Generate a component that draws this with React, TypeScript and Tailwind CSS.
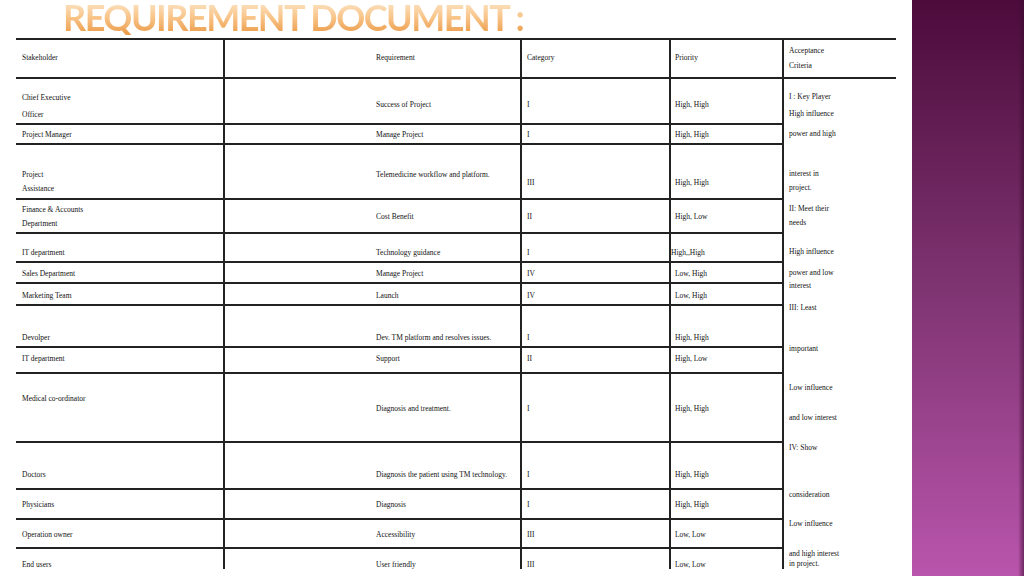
import React from 'react'

type Row = {
  s: string[]
  r: string
  c: string
  p: string
  sPad: string // stakeholder padding-top
  pad: string // padding-top for the other cells
  rPad?: string
  sGap?: string
  pPl?: string
}

const rows: Row[] = [
  { s: ['Chief Executive', 'Officer'], r: 'Success of Project', c: 'I', p: 'High, High', sPad: 'pt-[15px]', pad: 'pt-[22px]', sGap: 'gap-[9px]' },
  { s: ['Project Manager'], r: 'Manage Project', c: 'I', p: 'High, High', sPad: 'pt-[6px]', pad: 'pt-[6px]' },
  { s: ['Project', 'Assistance'], r: 'Telemedicine workflow and platform.', c: 'III', p: 'High, High', sPad: 'pt-[26px]', pad: 'pt-[34px]', rPad: 'pt-[26px]', sGap: 'gap-[6px]' },
  { s: ['Finance & Accounts', 'Department'], r: 'Cost Benefit', c: 'II', p: 'High, Low', sPad: 'pt-[6px]', pad: 'pt-[13px]', sGap: 'gap-[6px]' },
  { s: ['IT department'], r: 'Technology guidance', c: 'I', p: 'High,,High', sPad: 'pt-[15px]', pad: 'pt-[15px]', pPl: 'pl-0' },
  { s: ['Sales Department'], r: 'Manage Project', c: 'IV', p: 'Low, High', sPad: 'pt-[7px]', pad: 'pt-[7px]' },
  { s: ['Marketing Team'], r: 'Launch', c: 'IV', p: 'Low, High', sPad: 'pt-[8px]', pad: 'pt-[8px]' },
  { s: ['Devolper'], r: 'Dev. TM platform and resolves issues.', c: 'I', p: 'High, High', sPad: 'pt-[28px]', pad: 'pt-[28px]' },
  { s: ['IT department'], r: 'Support', c: 'II', p: 'High, Low', sPad: 'pt-[7px]', pad: 'pt-[7px]' },
  { s: ['Medical co-ordinator'], r: 'Diagnosis and treatment.', c: 'I', p: 'High, High', sPad: 'pt-[21px]', pad: 'pt-[31px]' },
  { s: ['Doctors'], r: 'Diagnosis the patient using TM technology.', c: 'I', p: 'High, High', sPad: 'pt-[28px]', pad: 'pt-[28px]' },
  { s: ['Physicians'], r: 'Diagnosis', c: 'I', p: 'High, High', sPad: 'pt-[11px]', pad: 'pt-[11px]' },
  { s: ['Operation owner'], r: 'Accessibility', c: 'III', p: 'Low, Low', sPad: 'pt-[11px]', pad: 'pt-[11px]' },
  { s: ['End users'], r: 'User friendly', c: 'III', p: 'Low, Low', sPad: 'pt-[12px]', pad: 'pt-[12px]' },
]

// acceptance criteria lines, each with its top margin
const criteria: [string, string][] = [
  ['I : Key Player', 'mt-[14px]'],
  ['High influence', 'mt-[9px]'],
  ['power and high', 'mt-[12px]'],
  ['interest in', 'mt-[32px]'],
  ['project.', 'mt-[6px]'],
  ['II: Meet their', 'mt-[13px]'],
  ['needs', 'mt-[6px]'],
  ['High influence', 'mt-[21px]'],
  ['power and low', 'mt-[13px]'],
  ['interest', 'mt-[5px]'],
  ['III: Least', 'mt-[14px]'],
  ['important', 'mt-[33px]'],
  ['Low influence', 'mt-[31px]'],
  ['and low interest', 'mt-[22px]'],
  ['IV: Show', 'mt-[22px]'],
  ['consideration', 'mt-[39px]'],
  ['Low influence', 'mt-[21px]'],
  ['and high interest', 'mt-[22px]'],
  ['in project.', 'mt-[2px]'],
]

export default function App() {
  return (
    <div className="flex h-[576px] w-[1024px] overflow-hidden bg-white">
      <div className="flex w-[912px] flex-col">
        {/* Title */}
        <div className="h-[38px] pl-[63px]">
          <h1 className="bg-gradient-to-b from-[#fde6c8] via-[#f8c488] to-[#eb9a45] bg-clip-text font-['Lato',sans-serif] text-[36px] font-bold leading-[35px] tracking-[-1.5px] text-transparent">
            REQUIREMENT DOCUMENT :
          </h1>
        </div>

        {/* Table */}
        <div className="ml-4 grid w-[880px] grid-cols-[209px_297px_149px_113px_112px] grid-rows-[39px_46px_20px_55px_34px_29px_21px_22px_42px_26px_69px_47px_30px_29px_20px] border-t-2 border-[#222] font-['Liberation_Serif',serif] text-[7.5px] leading-[8px] text-[#111]">
          <div className="border-b-2 border-r-2 border-[#222] pl-[6px] pt-[14px]">Stakeholder</div>
          <div className="border-b-2 border-r-2 border-[#222] pl-[151px] pt-[14px]">Requirement</div>
          <div className="border-b-2 border-r-2 border-[#222] pl-[5px] pt-[14px]">Category</div>
          <div className="border-b-2 border-r-2 border-[#222] pl-[4px] pt-[14px]">Priority</div>
          <div className="flex flex-col gap-[7px] border-b-2 border-[#222] pl-[5px] pt-[7px]">
            <span>Acceptance</span>
            <span>Criteria</span>
          </div>

          <div className="col-start-5 row-span-14 row-start-2 flex flex-col pl-[5px]">
            {criteria.map(([t, m], i) => (
              <span key={i} className={m}>
                {t}
              </span>
            ))}
          </div>

          {rows.map((row, i) => {
            const bottom = i < rows.length - 1 ? 'border-b-2' : ''
            return (
              <React.Fragment key={i}>
                <div className={`flex flex-col border-r-2 border-[#222] pl-[6px] ${bottom} ${row.sPad} ${row.sGap ?? ''}`}>
                  {row.s.map((t) => (
                    <span key={t}>{t}</span>
                  ))}
                </div>
                <div className={`border-r-2 border-[#222] pl-[151px] ${bottom} ${row.rPad ?? row.pad}`}>{row.r}</div>
                <div className={`border-r-2 border-[#222] pl-[5px] ${bottom} ${row.pad}`}>{row.c}</div>
                <div className={`border-r-2 border-[#222] ${row.pPl ?? 'pl-[4px]'} ${bottom} ${row.pad}`}>{row.p}</div>
              </React.Fragment>
            )
          })}
        </div>
      </div>

      {/* Side band */}
      <div className="relative w-[112px] bg-gradient-to-b from-[#4c0b3b] via-[#7f3472] to-[#b955ac]">
        <div className="absolute right-0 top-0 h-full w-[6px] bg-gradient-to-r from-transparent to-[#3a0a2e]/60" />
      </div>
    </div>
  )
}
